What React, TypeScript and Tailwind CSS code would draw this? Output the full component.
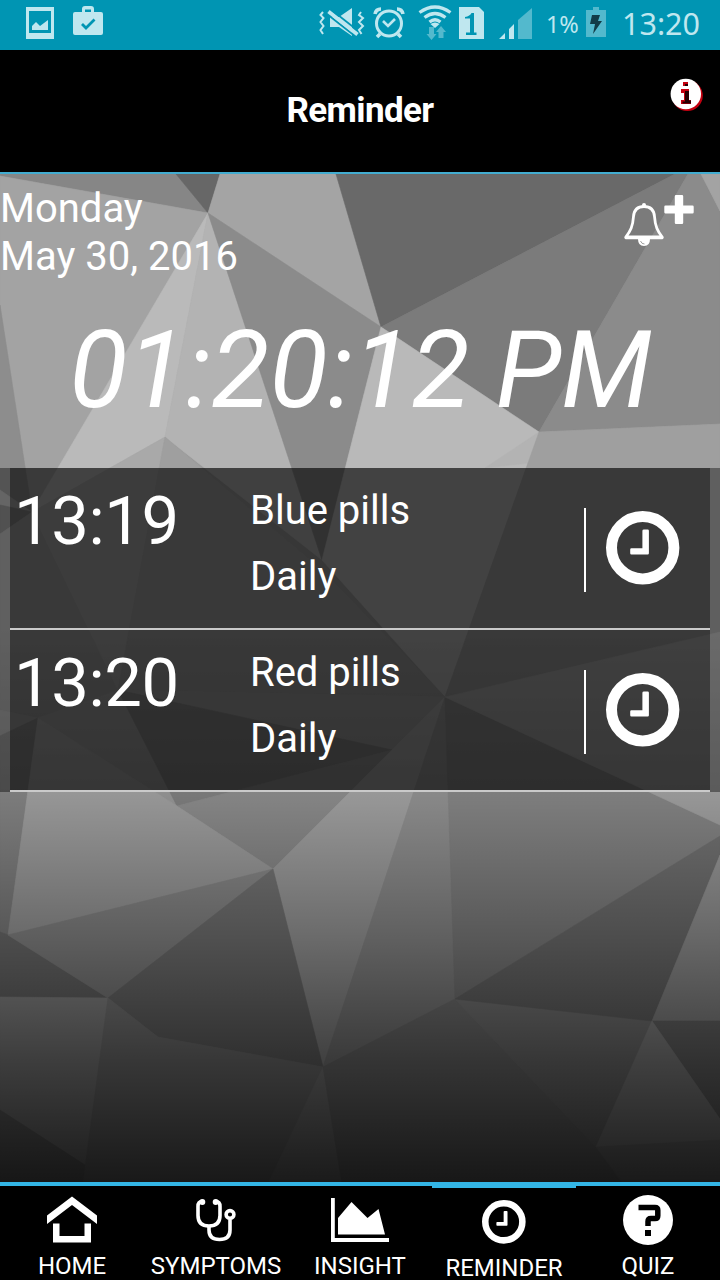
import React from "react";

type Facet = [string, string];

const facets: Facet[] = [
  ["0,174 176,174 208,213 0,176", "#868686"],
  ["176,174 220,174 208,213", "#676767"],
  ["220,174 336,174 381,327 208,213", "#a4a4a4"],
  ["336,174 675,174 381,327", "#696969"],
  ["675,174 688,174 539,432 381,327", "#7b7b7b"],
  ["688,174 701,174 720,211 720,424 539,432", "#8b8b8b"],
  ["701,174 720,174 720,211", "#a3a3a3"],
  ["0,176 208,213 32,512 0,305", "#a3a3a3"],
  ["0,305 32,512 0,490", "#8d8d8d"],
  ["208,213 165,437 32,512", "#bababa"],
  ["208,213 322,560 165,437", "#b3b3b3"],
  ["208,213 381,327 322,560", "#8b8b8b"],
  ["381,327 539,432 445,697 322,560", "#b9b9b9"],
  ["539,432 528,463 485,468", "#b3b3b3"],
  ["539,432 720,424 720,632 445,697", "#9f9f9f"],
  ["0,490 32,512 0,505", "#a8a8a8"],
  ["0,505 32,512 0,534", "#878787"],
  ["0,534 32,512 118,690 38,718 0,710", "#a0a0a0"],
  ["32,512 165,437 118,690", "#a9a9a9"],
  ["165,437 322,570 445,697 118,690", "#9f9f9f"],
  ["0,710 38,718 0,736", "#a8a8a8"],
  ["0,736 38,718 8,935 0,932", "#929292"],
  ["38,718 118,690 177,806", "#a8a8a8"],
  ["118,690 445,697 392,750", "#a6a6a6"],
  ["118,690 392,750 177,806", "#8e8e8e"],
  ["177,806 392,750 273,869", "#9c9c9c"],
  ["38,718 177,806 273,869 8,935", "#b1b1b1"],
  ["445,697 273,869 323,1067", "#b3b3b3"],
  ["445,697 455,999 323,1067", "#a1a1a1"],
  ["445,697 720,825 720,836 455,999", "#949494"],
  ["445,697 720,632 720,825", "#b2b2b2"],
  ["0,932 8,935 108,998 0,997", "#808080"],
  ["8,935 273,869 108,998", "#9d9d9d"],
  ["273,869 323,1067 158,1037 108,998", "#868686"],
  ["0,997 108,998 85,1165 0,1110", "#aaaaaa"],
  ["0,1110 85,1165 83,1184 0,1184", "#8c8c8c"],
  ["108,998 158,1037 323,1067 270,1184 83,1184", "#999999"],
  ["323,1067 342,1184 268,1184", "#a6a6a6"],
  ["323,1067 455,999 596,1147 622,1184 342,1184", "#929292"],
  ["455,999 652,1021 596,1147", "#989898"],
  ["455,999 720,836 720,855 652,1021", "#818181"],
  ["720,855 720,1021 652,1021", "#adadad"],
  ["652,1021 720,1021 720,1119", "#898989"],
  ["652,1021 720,1119 720,1140 596,1147", "#b1b1b1"],
  ["596,1147 720,1140 720,1184 624,1184", "#a0a0a0"],
];

function Backdrop() {
  return (
    <svg className="absolute inset-0 h-full w-full" viewBox="0 174 720 1008" preserveAspectRatio="none">
      <defs>
        <linearGradient id="shade" gradientUnits="userSpaceOnUse" x1="0" y1="174" x2="0" y2="1182">
          <stop offset="0.45" stopColor="#000" stopOpacity="0" />
          <stop offset="0.613" stopColor="#000" stopOpacity="0.15" />
          <stop offset="0.755" stopColor="#000" stopOpacity="0.4" />
          <stop offset="0.879" stopColor="#000" stopOpacity="0.64" />
          <stop offset="1" stopColor="#000" stopOpacity="0.84" />
        </linearGradient>
      </defs>
      <rect x="0" y="174" width="720" height="1008" fill="#9a9a9a" />
      {facets.map(([points, fill]) => (
        <polygon key={points} points={points} fill={fill} stroke={fill} strokeWidth="0.6" />
      ))}
      <rect x="0" y="174" width="720" height="1008" fill="url(#shade)" />
    </svg>
  );
}

function StatusBar() {
  return (
    <div className="flex h-[50px] shrink-0 items-center bg-[#0095b3] pl-[24px] pr-[20px] text-[#bfe7ef]">
      <svg width="32" height="50" viewBox="24 0 32 50" fill="currentColor">
        <path fillRule="evenodd" d="M26 7h28v32H26zM29 11v22h22V11z" />
        <path d="M32 30v-4l4-4 4 4 8-6v10z" />
      </svg>
      <svg className="ml-[16px]" width="32" height="50" viewBox="72 0 32 50" fill="currentColor">
        <path fillRule="evenodd" d="M82 12V9q0-3 3-3h6q3 0 3 3v3h7q2 0 2 2v19q0 2-2 2H75q-2 0-2-2V14q0-2 2-2zM85 12h6V9.500h-6z" />
        <path d="M82 24l4 4 8.500-8.500" fill="none" stroke="#0095b3" strokeWidth="2.800" />
      </svg>
      <div className="flex-1" />
      <svg width="48" height="50" viewBox="318 0 48 50" fill="currentColor">
        <path d="M330 17h9l13-9v28l-13-9h-9z" />
        <path d="M327 14l28 22" stroke="#0095b3" strokeWidth="2" />
        <path d="M328.500 11.500l29 23" stroke="currentColor" strokeWidth="3.800" />
        <path d="M331 9.500l28 22" stroke="#0095b3" strokeWidth="1.600" />
        <path d="M323 12l-2.500 3 3 3-3 4 3 4-3 4 2.500 4M361 12l-2 3 4 3-4 4 4 4-4 4 2.500 4" fill="none" stroke="currentColor" strokeWidth="2" />
      </svg>
      <svg className="ml-[6px]" width="34" height="50" viewBox="372 0 34 50" fill="none" stroke="currentColor">
        <circle cx="389" cy="23.500" r="12.500" strokeWidth="3" />
        <path d="M383 21l5 5 7-7" strokeWidth="2.600" />
        <path d="M375 14q1-5 6-5M397 9q5 0 6 5M380 34l-3 3M398 34l3 3" strokeWidth="3.600" />
      </svg>
      <svg className="ml-[12px]" width="36" height="50" viewBox="418 0 36 50" fill="none" stroke="currentColor">
        <path d="M419.500 12.500q15.500-11 31 0M424.500 17.500q10.500-8 21 0M429.500 22q5.500-4.500 11 0" strokeWidth="3.200" />
        <path d="M430.500 24q4.500-3 9 0l-4.500 4z" fill="currentColor" stroke="none" />
        <path d="M429 27h5v7h2.500l-5 6-5-6h2.500zM438.500 38v-6h-2.500l5-6 5 6h-2.500v6z" fill="#53b9cd" stroke="none" />
      </svg>
      <svg className="ml-[4px]" width="28" height="50" viewBox="458 0 28 50" fill="currentColor">
        <path d="M459 7h20l5 5v27h-25z" />
        <path d="M465 17q5-1 6.500-4h2.500v19.500h2.500V35H466v-2.500h4V18.500h-5z" fill="#0095b3" />
      </svg>
      <svg className="ml-[12px]" width="34" height="50" viewBox="498 0 34 50" fill="currentColor">
        <path d="M499 39l6-6v6zM509 39V29l5-5v15z" />
        <path d="M518 39V20l14-12v31z" fill="#53b9cd" />
      </svg>
      <span className="ml-[14px] w-[34px] whitespace-nowrap pb-[3px] font-['Noto_Sans'] text-[23.500px] leading-[46px] tracking-[-0.300px]">1%</span>
      <svg className="ml-[5px]" width="22" height="50" viewBox="585 0 22 50">
        <path d="M586 10h7V7h6v3h7v27h-20z" fill="#53b9cd" />
        <path d="M592 15h8l-2 6h4l-9 13 2-10h-5z" fill="#123c47" />
      </svg>
      <span className="ml-[15px] w-[78px] whitespace-nowrap pb-[4px] font-['Noto_Sans'] text-[30.500px] leading-[46px]">13:20</span>
    </div>
  );
}

function Header() {
  return (
    <header className="relative flex h-[124px] shrink-0 items-center justify-center border-b-2 border-[#42acd0] bg-black">
      <h1 className="text-[35px] font-bold leading-[40px] tracking-[-0.600px]">Reminder</h1>
      <svg className="absolute right-[12px] top-[24px]" width="40" height="40" viewBox="668 74 40 40">
        <circle cx="687.300" cy="95.600" r="15.500" fill="#c40010" />
        <circle cx="685.800" cy="94" r="15.200" fill="#fff" />
        <path d="M683 82h5v4h-5zM681 89h8v11h2v4h-10v-4h3v-7h-3z" fill="#c40010" />
        <path d="M685 84h3v2h-3zM685 91h4v9.500h2v3h-8.500v-2h2.500z" fill="#260003" />
      </svg>
    </header>
  );
}

function AddReminderIcon() {
  return (
    <svg width="74" height="56" viewBox="622 192 74 56" fill="none" stroke="#fff">
      <path d="M644 206.500c-6.500 0-10 4-10.500 10c-.7 10-3 14.500-7.700 20.500h36.400c-4.700-6-7-10.500-7.700-20.500c-.5-6-4-10-10.500-10z" strokeWidth="2.800" strokeLinejoin="round" />
      <path d="M626 237.800h36" strokeWidth="3" strokeLinecap="round" />
      <circle cx="644" cy="205" r="2" fill="#fff" stroke="none" />
      <path d="M638 239h12q0 7-6 7t-6-7z" fill="#fff" stroke="none" />
      <path d="M640.500 241q1 3 4 3" stroke="#888" strokeWidth="0.800" />
      <path d="M676 195h6q1.200 0 1.200 1.200v9.300h9.300q1.200 0 1.200 1.200v5.600q0 1.200-1.200 1.200h-9.300v9.300q0 1.200-1.200 1.200h-6q-1.200 0-1.200-1.200v-9.300h-9.300q-1.200 0-1.200-1.200v-5.600q0-1.200 1.200-1.200h9.300v-9.300q0-1.200 1.200-1.200z" fill="#fff" stroke="none" />
    </svg>
  );
}

function ClockIcon({ className }: { className: string }) {
  return (
    <svg className={className} viewBox="0 0 74 74">
      <circle cx="36.700" cy="36.700" r="31.200" fill="none" stroke="#fff" strokeWidth="11" />
      <path d="M38 18.500h3.700q1.200 0 1.200 1.200v22.500q0 1.200-1.200 1.200H25.400q-1.200 0-1.200-1.200v-3.800q0-1.200 1.200-1.200h11V19.700q0-1.200 1.600-1.200z" fill="#fff" />
    </svg>
  );
}

function ReminderRow({ time, name, repeat }: { time: string; name: string; repeat: string }) {
  return (
    <li className="flex h-[162px] border-b-2 border-[#cacaca] bg-black/40">
      <div className="w-[240px] pl-[4px] pt-[13px] text-[67px] leading-[80px] tracking-[-0.400px]">{time}</div>
      <div className="flex-1 pt-[10px] text-[40px] leading-[66px]">
        <p>{name}</p>
        <p>{repeat}</p>
      </div>
      <div className="mt-[40px] flex h-[84px] w-[126px] items-center border-l-2 border-white pb-[4px] pl-[20px]">
        <ClockIcon className="h-[74px] w-[74px]" />
      </div>
    </li>
  );
}

function HomeIcon() {
  return (
    <svg width="52" height="48" viewBox="46 1195.500 52 48" fill="#fff">
      <path d="M47 1215l25-19 25 19v8.500l-25-19-25 19z" />
      <path d="M53 1223h6.500v12.500h25V1223H91v19H53z" />
    </svg>
  );
}

function StethoscopeIcon() {
  return (
    <svg width="42" height="46" viewBox="195 1197 42 46" fill="none" stroke="#fff" strokeWidth="3.600">
      <path d="M202 1201.500q-4 0-4 5v9q0 10.500 11 10.500t11-10.500v-9q0-5-4-5" />
      <path d="M209 1226v4q0 9.500 10.500 9.500T230 1230v-10" />
      <circle cx="230" cy="1214.500" r="3.900" />
      <circle cx="202.300" cy="1202" r="3" fill="#fff" stroke="none" />
      <circle cx="215.700" cy="1202" r="3" fill="#fff" stroke="none" />
    </svg>
  );
}

function ChartIcon() {
  return (
    <svg width="60" height="46" viewBox="330 1197 60 46" fill="#fff">
      <path d="M331 1198h3.800v40H389v4h-58z" />
      <path d="M338 1234.500V1218l13.500-16 16 16 11-9 6.500 25.500z" />
    </svg>
  );
}

function QuizIcon() {
  return (
    <svg width="50" height="50" viewBox="0 0 50 50">
      <circle cx="25" cy="25" r="25" fill="#fff" />
      <path d="M15.500 12.500H32q2.800 0 2.800 2.800v5.400q0 2.800-2.800 2.800h-4q-3 0-3 3V31" fill="none" stroke="#000" strokeWidth="5.500" />
      <path d="M22 35h6v6h-6z" fill="#000" />
    </svg>
  );
}

function Tab({ label, icon, active = false }: { label: string; icon: React.ReactNode; active?: boolean }) {
  return (
    <div className={active ? "flex w-[144px] flex-col items-center border-t-2 border-[#33b5e5]" : "flex w-[144px] flex-col items-center"}>
      <div className="flex h-[68px] items-center">{icon}</div>
      <span className="mt-px whitespace-nowrap text-[24px] leading-[22px]">{label}</span>
    </div>
  );
}

export default function App() {
  return (
    <div className="flex h-[1280px] w-[720px] flex-col overflow-hidden bg-black font-['Roboto',sans-serif] text-white">
      <StatusBar />
      <Header />
      <main className="relative h-[1008px] shrink-0">
        <Backdrop />
        <div className="relative flex h-full flex-col">
          <div className="flex h-[120px] justify-between pr-[24px]">
            <div className="pt-[11px] text-[40px] leading-[48px]">
              <p>Monday</p>
              <p>May 30, 2016</p>
            </div>
            <div className="pt-[18px]">
              <AddReminderIcon />
            </div>
          </div>
          <div className="h-[174px] whitespace-nowrap pt-[13px] pl-px text-center text-[107px] italic leading-[128px] tracking-[-0.1px]">
            01:20:12 PM
          </div>
          <ul className="bg-black/40 px-[10px]">
            <ReminderRow time="13:19" name="Blue pills" repeat="Daily" />
            <ReminderRow time="13:20" name="Red pills" repeat="Daily" />
          </ul>
        </div>
      </main>
      <nav className="flex h-[98px] shrink-0 border-t-4 border-[#33b5e5] bg-black">
        <Tab label="HOME" icon={<HomeIcon />} />
        <Tab label="SYMPTOMS" icon={<StethoscopeIcon />} />
        <Tab label="INSIGHT" icon={<ChartIcon />} />
        <Tab label="REMINDER" icon={<ClockIcon className="h-[44px] w-[44px]" />} active />
        <Tab label="QUIZ" icon={<QuizIcon />} />
      </nav>
    </div>
  );
}
